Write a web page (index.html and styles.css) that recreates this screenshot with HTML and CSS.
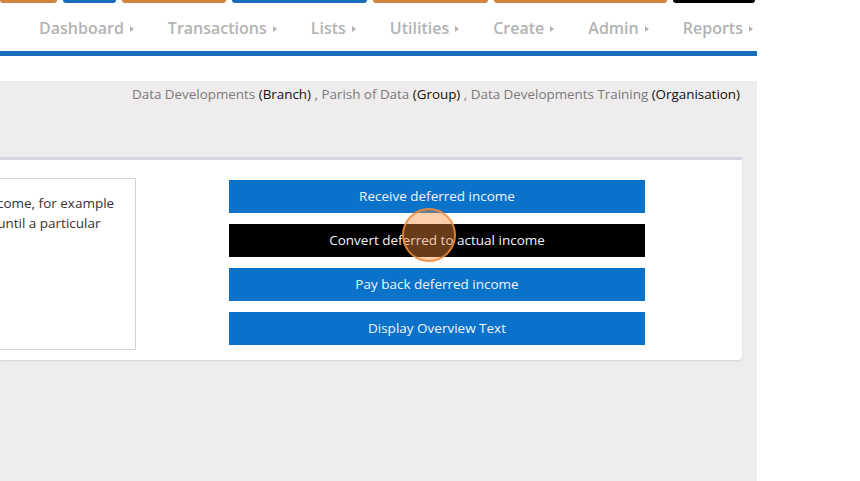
FILE: index.html
```html
<!DOCTYPE html>
<html lang="en">

<head>
    <meta charset="UTF-8">
    <meta name="viewport" content="width=device-width, initial-scale=1.0">
    <title>Deferred income</title>
    <link rel="stylesheet" href="styles.css">
</head>

<body>
    <div class="page">
        <div class="tab-strips">
            <span class="strip orange w57"></span>
            <span class="strip blue w53"></span>
            <span class="strip orange w104"></span>
            <span class="strip blue w135"></span>
            <span class="strip orange w115"></span>
            <span class="strip orange w173"></span>
            <span class="strip black w82"></span>
        </div>
        <div class="nav">
            <a class="nav-item" href="#">Dashboard</a>
            <a class="nav-item" href="#">Transactions</a>
            <a class="nav-item" href="#">Lists</a>
            <a class="nav-item" href="#">Utilities</a>
            <a class="nav-item" href="#">Create</a>
            <a class="nav-item" href="#">Admin</a>
            <a class="nav-item" href="#">Reports</a>
        </div>

        <div class="main">
            <div class="breadcrumb">
                Data Developments <b>(Branch)</b> , Parish of Data <b>(Group)</b> , Data Developments Training <b>(Organisation)</b>
            </div>

            <div class="panel">
                <div class="info-box">
                    Use these options to record deferred income, for example<br>
                    grant money that is held and not spent until a particular<br>
                    date is reached.
                </div>
                <div class="actions">
                    <a class="btn" href="#">Receive deferred income</a>
                    <a class="btn active" href="#">Convert deferred to actual income</a>
                    <a class="btn" href="#">Pay back deferred income</a>
                    <a class="btn" href="#">Display Overview Text</a>
                    <!-- click marker -->
                    <span class="click-dot"></span>
                </div>
            </div>
        </div>
    </div>
</body>

</html>
```

FILE: styles.css
```css
body {
    margin: 0;
    padding: 0;
    background: #fff;
    font-family: "Open Sans", "Liberation Sans", sans-serif;
    overflow: hidden;
}

.page {
    width: 757px;
}

.tab-strips {
    display: flex;
    gap: 6px;
    height: 3px;
}

.strip {
    display: block;
    height: 3px;
    border-radius: 0 0 3px 3px;
}

.strip.orange { background: #d1843f; }
.strip.blue { background: #1a6cb8; }
.strip.black { background: #000; }

.w57 { width: 57px; }
.w53 { width: 53px; }
.w104 { width: 104px; }
.w135 { width: 135px; }
.w115 { width: 115px; }
.w173 { width: 173px; }
.w82 { width: 82px; }

.nav {
    display: flex;
    align-items: center;
    gap: 34px;
    padding-left: 39px;
    padding-top: 2px;
    box-sizing: border-box;
    border-bottom: 5px solid #1a6cbf;
    height: 53px;
}

.nav-item {
    font-size: 16px;
    font-weight: 600;
    color: #b3b3b3;
    text-decoration: none;
    display: flex;
    align-items: center;
}

.nav-item::after {
    content: "";
    margin-left: 6px;
    margin-top: 2px;
    border-left: 4px solid #b3b3b3;
    border-top: 3.5px solid transparent;
    border-bottom: 3.5px solid transparent;
}

.main {
    margin-top: 25px;
    background: #eeeced;
    min-height: 420px;
    padding-top: 1px;
}

.breadcrumb {
    text-align: right;
    font-size: 13.4px;
    color: #7a7a7a;
    padding: 3px 17px 0 0;
    height: 72px;
}

.breadcrumb b {
    font-weight: normal;
    color: #111;
}

.panel {
    width: 742px;
    background: #fff;
    border-top: 3px solid #d6d6de;
    border-radius: 0 0 4px 0;
    box-shadow: 0 1px 2px rgba(0, 0, 0, 0.12);
    display: flex;
    align-items: flex-start;
    padding: 18px 0 10px 0;
    box-sizing: border-box;
}

.info-box {
    flex-shrink: 0;
    margin-left: -262px;
    width: 398px;
    height: 172px;
    box-sizing: border-box;
    border: 1px solid #d3d3d3;
    padding: 14px 10px;
    font-size: 13.5px;
    line-height: 20px;
    color: #333;
    white-space: nowrap;
    overflow: hidden;
}

.actions {
    position: relative;
    margin-left: 93px;
    margin-top: 2px;
    width: 416px;
    display: flex;
    flex-direction: column;
    gap: 11px;
}

.btn {
    display: block;
    height: 33px;
    line-height: 33px;
    text-align: center;
    background: #0a72c8;
    color: #eef4ff;
    font-size: 13.5px;
    text-decoration: none;
}

.btn.active {
    background: #000;
}

.click-dot {
    position: absolute;
    left: 173px;
    top: 28px;
    width: 50px;
    height: 50px;
    border-radius: 50%;
    background: rgba(247, 140, 60, 0.42);
    border: 2px solid rgba(240, 140, 60, 0.85);
}
```
